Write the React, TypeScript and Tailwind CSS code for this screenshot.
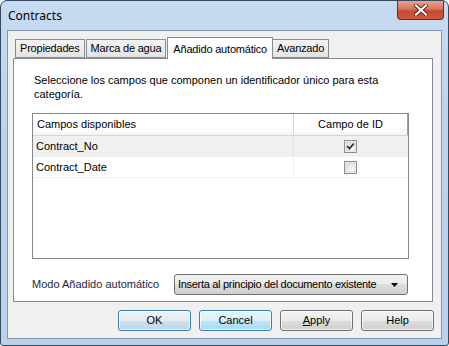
import React from 'react'

const tabs = ['Propiedades', 'Marca de agua', 'Añadido automático', 'Avanzado']

const Check: React.FC<{ checked?: boolean }> = ({ checked }) => (
  <svg width="13" height="13" viewBox="0 0 13 13" className="block">
    <defs>
      <linearGradient id={checked ? 'cbg1' : 'cbg2'} x1="0" y1="0" x2="1" y2="1">
        <stop offset="0" stopColor="#dcdcdc" />
        <stop offset="1" stopColor="#ffffff" />
      </linearGradient>
    </defs>
    <rect x="0.5" y="0.5" width="12" height="12" fill="#fff" stroke="#8e8f8f" />
    <rect x="2" y="2" width="9" height="9" fill={`url(#${checked ? 'cbg1' : 'cbg2'})`} stroke="#b8bcc3" strokeWidth="0.6" />
    {checked && <path d="M3.2 6.2 L5.4 8.6 L9.8 3.6" fill="none" stroke="#2a3a4e" strokeWidth="1.8" />}
  </svg>
)

const Btn: React.FC<{ label: React.ReactNode; kind?: 'default' | 'hover' | 'normal' }> = ({ label, kind = 'normal' }) => {
  const look =
    kind === 'default'
      ? 'border-[#3c7fb1] bg-[linear-gradient(#edf3f8_0%,#e2ecf5_50%,#cfdfec_50%,#c2d6e8_100%)]'
      : kind === 'hover'
        ? 'border-[#3c7fb1] bg-[linear-gradient(#eaf6fd_0%,#d9f0fc_50%,#bee6fd_50%,#a7d9f5_100%)]'
        : 'border-[#707070] bg-[linear-gradient(#f2f2f2_0%,#ebebeb_50%,#dddddd_50%,#cfcfcf_100%)]'
  return (
    <div className={`w-[73px] h-[21px] rounded-[3px] border ${look} shadow-[inset_0_0_0_1px_rgba(255,255,255,0.7)] flex items-center justify-center text-[11px] text-black`}>
      {label}
    </div>
  )
}

export default function App() {
  return (
    <div className="w-[449px] h-[346px] overflow-hidden bg-white" style={{ fontFamily: '"Liberation Sans", Arial, sans-serif' }}>
      <div className="w-[449px] h-[346px] rounded-t-[7px] rounded-b-[3px] border border-[#39495c] bg-[linear-gradient(180deg,#c6dbf1_0%,#bcd3ec_40%,#b9d1ea_100%)] flex flex-col">
        {/* title bar */}
        <div className="h-[29px] flex items-start justify-between">
          <div className="pl-[7px] pt-[6px] text-[12px] text-black" style={{ fontFamily: '"Noto Sans", "Open Sans", sans-serif' }}>
            Contracts
          </div>
          <div className="mr-[4px] w-[47px] h-[19px] rounded-b-[4px] border border-t-0 border-[#6d2a23] bg-[linear-gradient(#e8a393_0%,#d7735e_45%,#c44b31_55%,#d0583a_100%)] flex items-center justify-center">
            <svg width="14" height="12" viewBox="0 0 14 12">
              <path d="M2 1.5 L12 10.5 M12 1.5 L2 10.5" stroke="#5b1f14" strokeWidth="4" strokeLinecap="square" />
              <path d="M2 1.5 L12 10.5 M12 1.5 L2 10.5" stroke="#ffffff" strokeWidth="2.2" strokeLinecap="square" />
            </svg>
          </div>
        </div>

        {/* client area */}
        <div className="mx-[6px] mb-[6px] flex-1 border border-[#8196b0] bg-[#f0f0f0] flex flex-col">
          <div className="pl-[5px] pr-[8px] pt-[6px]">
            {/* tabs */}
            <div className="flex items-end h-[21px] pl-[2px]">
              {tabs.map((t, i) =>
                i === 2 ? (
                  <div key={t} className="relative z-10 -mb-px ml-[1px] h-[22px] px-[5px] border border-b-0 border-[#898c95] bg-white text-[11px] tracking-[-0.2px] flex items-start pt-[3px]">
                    {t}
                  </div>
                ) : (
                  <div
                    key={t}
                    className={`h-[19px] px-[4px] border border-[#898c95] bg-[linear-gradient(#f3f3f3,#e4e4e4)] text-[11px] tracking-[-0.2px] flex items-center ${i === 1 ? 'ml-[1px]' : ''} ${i === 3 ? '-ml-px' : ''}`}
                  >
                    {t}
                  </div>
                )
              )}
            </div>

            {/* panel */}
            <div className="h-[244px] border border-[#898c95] bg-white flex flex-col pl-[18px] pr-[23px]">
              <p className="mt-[14px] text-[11px] leading-[14px] text-black pl-[2px]">
                Seleccione los campos que componen un identificador único para esta
                <br />
                categoría.
              </p>

              <div className="mt-[12px] h-[146px] border border-[#828790] bg-white flex flex-col">
                <div className="h-[22px] flex text-[11px] bg-[linear-gradient(#ffffff_0%,#ffffff_60%,#f3f4f6_100%)] border-b border-[#d5d5d5]">
                  <div className="w-[261px] flex items-center pl-[4px] border-r border-[#d5d5d5]">Campos disponibles</div>
                  <div className="flex-1 flex items-center justify-center border-r border-[#a0a0a0]">Campo de ID</div>
                </div>
                <div className="h-[21px] flex text-[11px] bg-[#f0f0f0] border-b border-[#f0f0f0]">
                  <div className="w-[261px] flex items-center pl-[3px] border-r border-[#e3e3e3]">Contract_No</div>
                  <div className="flex-1 flex items-center justify-center pr-[2px]">
                    <Check checked />
                  </div>
                </div>
                <div className="h-[21px] flex text-[11px] border-b border-[#f0f0f0]">
                  <div className="w-[261px] flex items-center pl-[3px] border-r border-[#f0f0f0]">Contract_Date</div>
                  <div className="flex-1 flex items-center justify-center pr-[2px]">
                    <Check />
                  </div>
                </div>
              </div>

              <div className="mt-[15px] flex items-center">
                <div className="w-[142px] text-[11px] text-[#1e1e3c]">Modo Añadido automático</div>
                <div className="w-[234px] h-[21px] rounded-[3px] border border-[#707070] bg-[linear-gradient(#f2f2f2_0%,#ebebeb_50%,#dddddd_50%,#cfcfcf_100%)] flex items-center justify-between pl-[3px] pr-[9px] text-[11px]">
                  <span className="tracking-[-0.3px]">Inserta al principio del documento existente</span>
                  <svg width="7" height="4" viewBox="0 0 7 4">
                    <path d="M0 0 H7 L3.5 4 Z" fill="#000" />
                  </svg>
                </div>
              </div>
            </div>
          </div>

          {/* buttons */}
          <div className="mt-[8px] flex justify-end gap-[8px] pr-[7px]">
            <Btn label="OK" kind="default" />
            <Btn label="Cancel" kind="hover" />
            <Btn label={<span><span className="underline">A</span>pply</span>} />
            <Btn label="Help" />
          </div>
        </div>
      </div>
    </div>
  )
}
